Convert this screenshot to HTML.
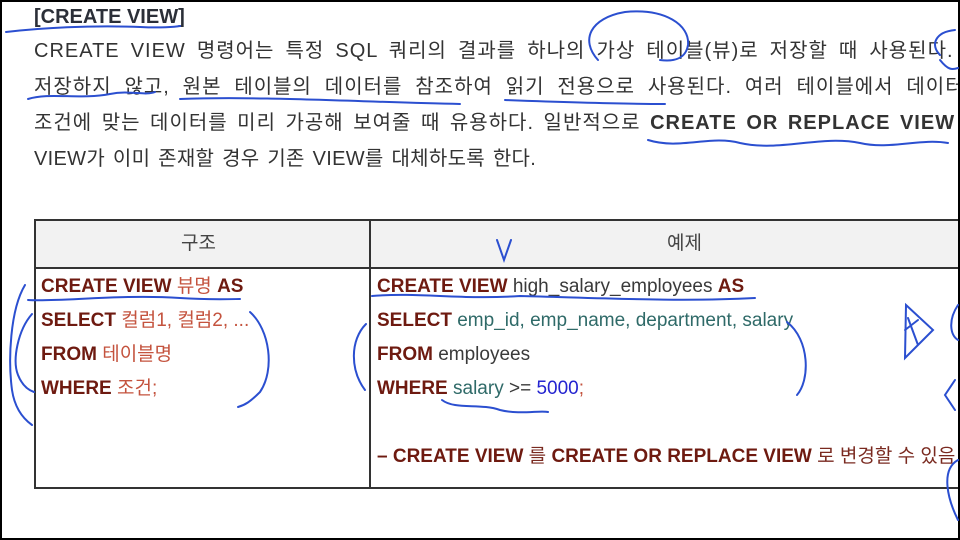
<!DOCTYPE html>
<html><head><meta charset="utf-8"><style>
*{margin:0;padding:0;box-sizing:border-box}
html,body{width:960px;height:540px;overflow:hidden;background:#000}
#pg{position:absolute;left:2px;top:2px;width:956px;height:536px;background:#fff;overflow:hidden}
.t{position:absolute;white-space:nowrap;font-family:"Liberation Sans","Noto Sans CJK KR",sans-serif;color:#333}
.ln{font-size:20px;letter-spacing:1px;left:32px;width:950px;text-align:justify;text-align-last:justify;height:28px;line-height:28px;overflow:hidden;white-space:normal}
.c{font-size:19px;line-height:22px;color:#3a3a3a}
.k{font-weight:bold;color:#6e1a10}
.p{color:#c4533e}
.g{color:#2f6a68}
.n{color:#2424d0}
.b{position:absolute;background:#333}
svg{position:absolute;left:0;top:0}
</style></head><body><div id="pg">
<div class="t" style="left:32px;top:4px;font-size:20px;font-weight:bold;color:#2b2f38">[CREATE VIEW]</div>
<div class="t ln" style="top:35px">CREATE VIEW 명령어는 특정 SQL 쿼리의 결과를 하나의 가상 테이블(뷰)로 저장할 때 사용된다. 뷰</div>
<div class="t ln" style="top:71px">저장하지 않고, 원본 테이블의 데이터를 참조하여 읽기 전용으로 사용된다. 여러 테이블에서 데이터를</div>
<div class="t ln" style="top:107px">조건에 맞는 데이터를 미리 가공해 보여줄 때 유용하다. 일반적으로 <b>CREATE OR REPLACE VIEW</b> 명</div>
<div class="t" style="left:32px;top:143px;font-size:20px;line-height:28px;letter-spacing:0.3px;word-spacing:2px">VIEW가 이미 존재할 경우 기존 VIEW를 대체하도록 한다.</div>
<div style="position:absolute;left:32px;top:217px;width:930px;height:49px;background:#f2f2f2"></div>
<div class="b" style="left:32px;top:217px;width:930px;height:2px"></div>
<div class="b" style="left:32px;top:265px;width:930px;height:2px"></div>
<div class="b" style="left:32px;top:485px;width:930px;height:2px"></div>
<div class="b" style="left:32px;top:217px;width:2px;height:270px"></div>
<div class="b" style="left:367px;top:217px;width:2px;height:270px"></div>
<div class="t" style="left:179px;top:226px;font-size:19px;color:#444">구조</div>
<div class="t" style="left:665px;top:226px;font-size:19px;color:#444">예제</div>
<div class="t c" style="left:39px;top:274px"><span class="k">CREATE VIEW</span> <span class="p">뷰명</span> <span class="k">AS</span></div>
<div class="t c" style="left:39px;top:308px"><span class="k">SELECT</span> <span class="p">컬럼1, 컬럼2, ...</span></div>
<div class="t c" style="left:39px;top:342px"><span class="k">FROM</span> <span class="p">테이블명</span></div>
<div class="t c" style="left:39px;top:376px"><span class="k">WHERE</span> <span class="p">조건;</span></div>
<div class="t c" style="left:375px;top:274px"><span class="k">CREATE VIEW</span> high_salary_employees <span class="k">AS</span></div>
<div class="t c" style="left:375px;top:308px"><span class="k">SELECT</span> <span class="g">emp_id, emp_name, department, salary</span></div>
<div class="t c" style="left:375px;top:342px"><span class="k">FROM</span> employees</div>
<div class="t c" style="left:375px;top:376px"><span class="k">WHERE</span> <span class="g">salary</span> &gt;= <span class="n">5000</span><span class="p">;</span></div>
<div class="t c" style="left:375px;top:444px"><span class="k">– CREATE VIEW</span> <span style="color:#7a2a20">를</span> <span class="k">CREATE OR REPLACE VIEW</span> <span style="color:#7a2a20">로 변경할 수 있음</span></div>
</div>
<svg width="960" height="540" fill="none" stroke="#2b4fd0" stroke-width="2" stroke-linecap="round">
<path d="M6 32 C40 28 90 25 140 27 C160 28 175 27 180 26"/>
<path d="M28 99 C50 92 80 100 110 94 C130 90 145 96 155 92"/>
<path d="M180 99 C260 96 360 102 460 104"/>
<path d="M505 100 C560 102 620 104 665 104"/>
<path d="M598 60 C580 40 590 18 625 12 C665 8 690 25 688 45 C686 58 675 62 660 60"/>
<path d="M940 55 C930 45 935 32 955 30 M940 60 C948 70 952 70 958 68"/>
<path d="M648 140 C680 150 710 135 740 143 C780 152 820 135 860 143 C890 150 920 138 948 143"/>
<path d="M28 300 C60 302 120 294 180 298 C210 300 235 299 240 299"/>
<path d="M25 285 C10 310 8 360 12 390 C15 410 25 420 32 425"/>
<path d="M32 314 C18 330 12 360 18 375 C22 385 28 390 34 392"/>
<path d="M250 312 C270 330 275 370 260 392 C250 402 245 405 238 407"/>
<path d="M372 296 C420 292 460 300 520 296 C600 298 680 302 755 298"/>
<path d="M497 240 L504 260 L511 240"/>
<path d="M366 324 C350 340 350 370 365 390"/>
<path d="M787 322 C810 340 810 380 797 395"/>
<path d="M442 400 C455 410 480 403 500 410 C520 415 540 410 548 412"/>
<path d="M906 305 L933 330 L905 358 Z M908 318 L918 345 M905 330 L918 320"/>
<path d="M958 305 C948 320 950 335 958 340 M955 380 L945 395 L955 410"/>
<path d="M958 460 C940 470 948 500 958 520"/>
</svg>
</body></html>
